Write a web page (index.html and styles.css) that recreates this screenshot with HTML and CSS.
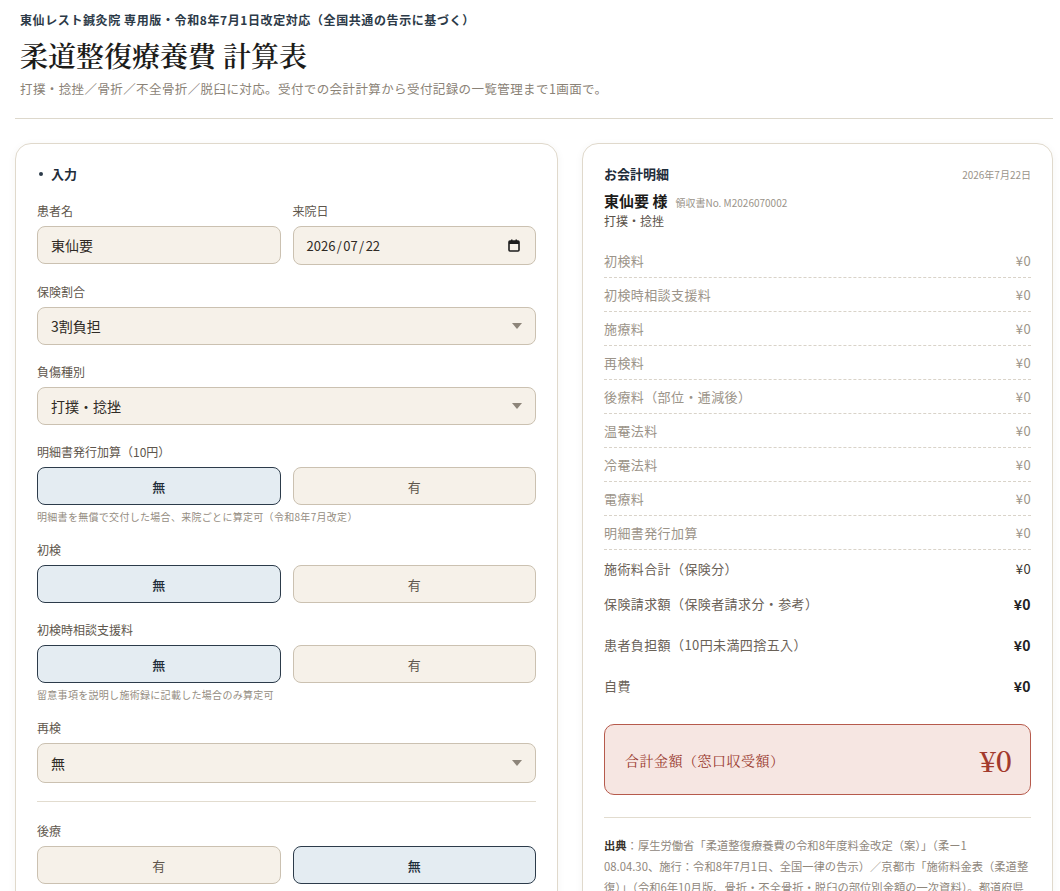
FILE: index.html
```html
<!DOCTYPE html>
<html lang="ja">
<head>
    <meta charset="UTF-8">
    <meta name="viewport" content="width=device-width, initial-scale=1.0">
    <title>柔道整復療養費 計算表</title>
    <link rel="stylesheet" href="styles.css">
</head>
<body>
<div class="page">
    <header class="page-head">
        <p class="eyebrow">東仙レスト鍼灸院 専用版・令和8年7月1日改定対応（全国共通の告示に基づく）</p>
        <h1>柔道整復療養費 計算表</h1>
        <p class="lead">打撲・捻挫／骨折／不全骨折／脱臼に対応。受付での会計計算から受付記録の一覧管理まで1画面で。</p>
    </header>

    <main class="layout">
        <section class="card form-card">
            <h2 class="card-title">入力</h2>

            <div class="row-2">
                <div class="field">
                    <label>患者名</label>
                    <input class="input" type="text" value="東仙要">
                </div>
                <div class="field">
                    <label>来院日</label>
                    <div class="input date">
                        <span>2026 / 07 / 22</span>
                        <svg width="12" height="13" viewBox="0 0 12 13">
                            <rect x="1" y="2" width="10" height="10" rx="1" fill="none" stroke="#1d1d1d" stroke-width="1.6"/>
                            <rect x="1" y="2" width="10" height="3" fill="#1d1d1d"/>
                            <rect x="3" y="0.5" width="1.5" height="2.5" fill="#1d1d1d"/>
                            <rect x="7.5" y="0.5" width="1.5" height="2.5" fill="#1d1d1d"/>
                        </svg>
                    </div>
                </div>
            </div>

            <div class="field">
                <label>保険割合</label>
                <div class="select">
                    <select class="input">
                        <option>3割負担</option>
                        <option>2割負担</option>
                        <option>1割負担</option>
                    </select>
                </div>
            </div>

            <div class="field">
                <label>負傷種別</label>
                <div class="select">
                    <select class="input">
                        <option>打撲・捻挫</option>
                        <option>骨折</option>
                        <option>不全骨折</option>
                        <option>脱臼</option>
                    </select>
                </div>
            </div>

            <div class="field">
                <label>明細書発行加算（10円）</label>
                <div class="toggle">
                    <button class="on">無</button>
                    <button>有</button>
                </div>
                <p class="hint">明細書を無償で交付した場合、来院ごとに算定可（令和8年7月改定）</p>
            </div>

            <div class="field">
                <label>初検</label>
                <div class="toggle">
                    <button class="on">無</button>
                    <button>有</button>
                </div>
            </div>

            <div class="field">
                <label>初検時相談支援料</label>
                <div class="toggle">
                    <button class="on">無</button>
                    <button>有</button>
                </div>
                <p class="hint">留意事項を説明し施術録に記載した場合のみ算定可</p>
            </div>

            <div class="field">
                <label>再検</label>
                <div class="select">
                    <select class="input tall">
                        <option>無</option>
                        <option>有</option>
                    </select>
                </div>
            </div>

            <hr class="sep">

            <div class="field">
                <label>後療</label>
                <div class="toggle">
                    <button>有</button>
                    <button class="on">無</button>
                </div>
            </div>

            <div class="field">
                <label>部位数</label>
                <div class="select">
                    <select class="input">
                        <option>1部位</option>
                    </select>
                </div>
            </div>
        </section>

        <section class="card bill-card">
            <div class="bill-head">
                <h2>お会計明細</h2>
                <span class="bill-date">2026年7月22日</span>
            </div>
            <div class="patient">
                <strong>東仙要 様</strong>
                <span>領収書No. M2026070002</span>
            </div>
            <div class="injury">打撲・捻挫</div>

            <div class="lines">
                <div class="line"><span>初検料</span><span>¥0</span></div>
                <div class="line"><span>初検時相談支援料</span><span>¥0</span></div>
                <div class="line"><span>施療料</span><span>¥0</span></div>
                <div class="line"><span>再検料</span><span>¥0</span></div>
                <div class="line"><span>後療料（部位・逓減後）</span><span>¥0</span></div>
                <div class="line"><span>温罨法料</span><span>¥0</span></div>
                <div class="line"><span>冷罨法料</span><span>¥0</span></div>
                <div class="line"><span>電療料</span><span>¥0</span></div>
                <div class="line"><span>明細書発行加算</span><span>¥0</span></div>
            </div>

            <div class="sum subtotal"><span>施術料合計（保険分）</span><span>¥0</span></div>
            <div class="sum"><span>保険請求額（保険者請求分・参考）</span><b>¥0</b></div>
            <div class="sum"><span>患者負担額（10円未満四捨五入）</span><b>¥0</b></div>
            <div class="sum"><span>自費</span><b>¥0</b></div>

            <div class="total">
                <span class="total-label">合計金額（窓口収受額）</span>
                <span class="total-value">¥0</span>
            </div>

            <p class="source"><b>出典</b>：厚生労働省「柔道整復療養費の令和8年度料金改定（案）」（柔ー1<br>08.04.30、施行：令和8年7月1日、全国一律の告示）／京都市「施術料金表（柔道整復）」（令和6年10月版、骨折・不全骨折・脱臼の部位別金額の一次資料）。都道府県による独自の助成・加算は含みません。</p>
        </section>
    </main>
</div>
</body>
</html>
```

FILE: styles.css
```css
body {
    margin: 0;
    font-family: "Noto Sans CJK JP", "Noto Sans", sans-serif;
    color: #3d3730;
    background: #fff;
}
.page {
    padding: 12px 7px 0 15px;
}
.page-head {
    padding: 0 0 20px 5px;
    border-bottom: 1px solid #ddd8cc;
}
.eyebrow {
    margin: 0;
    font-size: 12px;
    line-height: 16px;
    font-weight: 700;
    color: #2c3a48;
    letter-spacing: 0.6px;
}
h1 {
    margin: 9px 0 0;
    font-family: "Noto Serif CJK JP", "Liberation Serif", serif;
    font-size: 28px;
    line-height: 36px;
    font-weight: 600;
    color: #1c1b19;
}
.lead {
    margin: 7px 0 0;
    font-size: 12.5px;
    line-height: 18px;
    color: #8a8276;
    letter-spacing: 0.4px;
}
.layout {
    display: grid;
    grid-template-columns: 543px 471px;
    gap: 24px;
    margin-top: 24px;
    align-items: start;
}
.card {
    background: #fff;
    border: 1px solid #e0d9cc;
    border-radius: 16px;
    box-shadow: 0 2px 8px rgba(60, 50, 30, 0.05);
    padding: 21px 21px 24px;
}
.card-title {
    display: flex;
    align-items: center;
    gap: 8px;
    margin: 0 0 19px;
    font-size: 13px;
    line-height: 18px;
    font-weight: 700;
    color: #1f2d3a;
}
.card-title::before {
    content: "";
    width: 4px;
    height: 4px;
    margin-left: 2px;
    border-radius: 50%;
    background: #2c3b4a;
}
.row-2 {
    display: grid;
    grid-template-columns: 1fr 1fr;
    gap: 12px;
}
.field {
    margin-bottom: 18px;
}
.field label {
    display: block;
    font-size: 12px;
    line-height: 18px;
    color: #5e564c;
    margin-bottom: 6px;
}
.input {
    box-sizing: border-box;
    width: 100%;
    height: 38px;
    border: 1px solid #cbc1b1;
    border-radius: 8px;
    background: #f6f1e9;
    padding: 0 13px;
    font: inherit;
    font-size: 14px;
    color: #2f2a25;
    outline: none;
}
.input.tall {
    height: 40px;
}
.date {
    display: flex;
    align-items: center;
    justify-content: space-between;
    height: 39px;
    font-size: 13px;
    padding-right: 15px;
}
.date span {
    word-spacing: -1.5px;
}
.select {
    position: relative;
}
.select select {
    appearance: none;
    -webkit-appearance: none;
}
.select::after {
    content: "";
    position: absolute;
    right: 14px;
    top: calc(50% - 3px);
    border-left: 5px solid transparent;
    border-right: 5px solid transparent;
    border-top: 6px solid #8d857a;
    pointer-events: none;
}
.toggle {
    display: grid;
    grid-template-columns: 1fr 1fr;
    gap: 12px;
}
.toggle button {
    height: 38px;
    border: 1px solid #cbc1b1;
    border-radius: 8px;
    background: #f6f1e9;
    font: inherit;
    font-size: 13px;
    color: #5e564c;
    cursor: pointer;
}
.toggle .on {
    background: #e4ecf2;
    border: 1.5px solid #2c3b4a;
    color: #1f2d3a;
    font-weight: 500;
}
.hint {
    margin: 5px 0 0;
    font-size: 10px;
    line-height: 14px;
    color: #958d82;
    letter-spacing: 0.3px;
}
.field:has(.hint) {
    margin-bottom: 17px;
}
.sep {
    border: 0;
    border-top: 1px solid #e2dccf;
    margin: 2px 0 20px;
}

/* 会計明細 */
.bill-head {
    display: flex;
    justify-content: space-between;
    align-items: baseline;
}
.bill-head h2 {
    margin: 0;
    font-size: 13px;
    line-height: 18px;
    font-weight: 700;
    color: #1f2d3a;
}
.bill-date {
    font-size: 10px;
    color: #9a948a;
}
.patient {
    display: flex;
    align-items: baseline;
    gap: 8px;
    margin-top: 8px;
    line-height: 20px;
}
.patient strong {
    font-size: 15px;
    color: #1c1b19;
}
.patient span {
    font-size: 10px;
    color: #9a948a;
}
.injury {
    font-size: 12px;
    line-height: 16px;
    color: #5a5249;
}
.lines {
    margin-top: 15px;
}
.line {
    display: flex;
    justify-content: space-between;
    padding: 8px 0 7px;
    line-height: 18px;
    border-bottom: 1px dashed #d9d3c9;
    font-size: 13px;
    color: #9c9489;
    letter-spacing: 0.4px;
}
.sum {
    display: flex;
    justify-content: space-between;
    align-items: center;
    padding: 11px 0 12px;
    font-size: 13px;
    line-height: 18px;
    color: #6a6157;
    letter-spacing: 0.4px;
}
.sum b {
    font-size: 14px;
    color: #222;
}
.subtotal {
    padding: 10px 0 6px;
}
.subtotal span:last-child {
    color: #3a3530;
}
.total {
    box-sizing: border-box;
    height: 71px;
    margin-top: 17px;
    padding: 0 18px 0 20px;
    display: flex;
    justify-content: space-between;
    align-items: center;
    border: 1.5px solid #b65a4c;
    border-radius: 10px;
    background: #f6e6e2;
    font-family: "Noto Serif CJK JP", "Liberation Serif", serif;
}
.total-label {
    font-size: 14px;
    color: #9a3b2f;
    letter-spacing: 0.5px;
}
.total-value {
    font-size: 28px;
    font-weight: 600;
    color: #a33a2d;
}
.source {
    margin: 22px 0 0;
    padding-top: 17px;
    border-top: 1px solid #e2dccf;
    font-size: 11.3px;
    line-height: 21px;
    color: #8f877c;
}
.source b {
    color: #3a332c;
}
```
